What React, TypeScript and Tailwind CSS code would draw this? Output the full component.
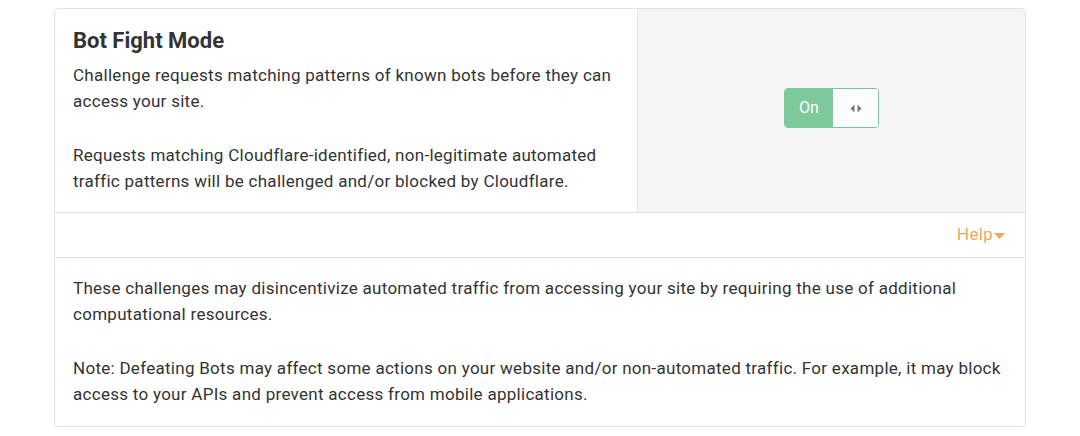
export default function App() {
  return (
    <div className="min-h-screen bg-white pt-2 font-['Roboto','Liberation_Sans',sans-serif] text-[#333]">
      <div className="mx-auto w-[972px] rounded-[4px] border border-[#e3e3e3]">
        {/* setting row */}
        <div className="flex border-b border-[#e3e3e3]">
          <div className="w-3/5 px-[18px] py-[18px]">
            <h3 className="text-[22px] leading-[28px] font-bold text-[#333]">Bot Fight Mode</h3>
            <p className="mt-[7px] text-[17px] leading-[26px] tracking-[0.28px]">
              Challenge requests matching patterns of known bots before they can access your site.
            </p>
            <p className="mt-[28px] text-[17px] leading-[26px] tracking-[0.28px]">
              Requests matching Cloudflare-identified, non-legitimate automated traffic patterns will be challenged and/or blocked by Cloudflare.
            </p>
          </div>
          <div className="flex w-2/5 items-center justify-center border-l border-[#e6e6e6] bg-[#f5f5f5] pb-[5px]">
            <div className="flex h-10 w-[95px] overflow-hidden rounded-[4px] border border-[#7cc79b] bg-white">
              <div className="flex w-[48px] items-center justify-center bg-[#7cc99b] text-[16px] text-white">On</div>
              <div className="flex flex-1 items-center justify-center rounded-l-[3px] bg-white">
                <svg width="12" height="9" viewBox="0 0 12 9">
                  <path d="M4.5 0.5 L0.5 4.5 L4.5 8.5 Z" fill="#777" />
                  <path d="M7.5 0.5 L11.5 4.5 L7.5 8.5 Z" fill="#777" />
                </svg>
              </div>
            </div>
          </div>
        </div>

        {/* help toggle */}
        <div className="flex h-[45px] items-center justify-end border-b border-[#e3e3e3] pr-[20px]">
          <button className="flex items-center text-[17px] tracking-[0.28px] text-[#f6a35f]">
            Help
            <svg width="11" height="6" viewBox="0 0 11 6" className="ml-[1px] mt-[2px]">
              <path d="M0 0 H11 L5.5 6 Z" fill="#f6a35f" />
            </svg>
          </button>
        </div>

        {/* help content */}
        <div className="px-[18px] pt-[17px] pb-[19px] text-[17px] leading-[26px] tracking-[0.28px]">
          <p>
            These challenges may disincentivize automated traffic from accessing your site by requiring the use of additional computational resources.
          </p>
          <p className="mt-[28px]">
            Note: Defeating Bots may affect some actions on your website and/or non-automated traffic. For example, it may block access to your APIs and prevent access from mobile applications.
          </p>
        </div>
      </div>
    </div>
  );
}
